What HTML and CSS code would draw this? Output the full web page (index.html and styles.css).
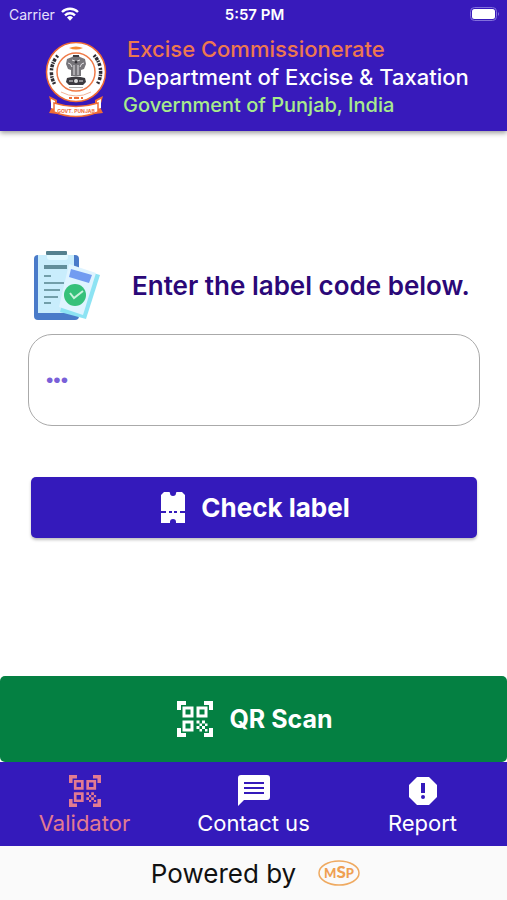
FILE: index.html
```html
<!DOCTYPE html>
<html lang="en">
<head>
<meta charset="utf-8">
<meta name="viewport" content="width=device-width, initial-scale=1">
<title>Label Validator</title>
<link rel="stylesheet" href="styles.css">
</head>
<body>
<svg class="defs" width="0" height="0" aria-hidden="true">
  <symbol id="qr" viewBox="0 0 36 36">
    <path fill="currentColor" d="M0 0h9v4H4v5H0zM27 0h9v9h-4V4h-5zM0 27h4v5h5v4H0zM32 27h4v9h-9v-4h5z"/>
    <path fill="none" stroke="currentColor" stroke-width="3" d="M7 7h8v8H7zM21 7h8v8h-8zM7 21h8v8H7z"/>
    <path fill="currentColor" d="M19.500 19.500h3v3h-3zM25 19.500h3v3h-3zM22.500 22.500H25V25h-2.500zM28 22.500h2.500V25H28zM19.500 25h3v3h-3zM25 25h3v3h-3zM22.500 28H25v2.500h-2.500zM28 28h2.500v2.500H28z"/>
  </symbol>
</svg>
<header class="top">
  <div class="status">
    <span class="carrier">Carrier
      <svg width="18" height="14" viewBox="0 0 18 14" aria-hidden="true"><g fill="none" stroke="#fff" stroke-width="2.400"><path d="M1 5a11.500 11.500 0 0 1 16 0"/><path d="M4 8.300a7.200 7.200 0 0 1 10 0"/></g><path fill="#fff" d="M6 10.500a4.400 4.400 0 0 1 6 0L9 13.700z"/></svg>
    </span>
    <span class="clock">5:57 PM</span>
    <svg class="battery" width="30" height="14" viewBox="0 0 30 14" role="img" aria-label="Battery full"><rect x=".5" y=".5" width="26" height="13" rx="4" fill="none" stroke="#8270dc"/><rect x="2" y="2" width="23" height="10" rx="2.500" fill="#fff"/><path fill="#8270dc" d="M28 5q2 2 0 4z"/></svg>
  </div>
  <div class="brand">
    <svg class="seal" width="62" height="76" viewBox="0 0 62 76" role="img" aria-label="Government of Punjab seal">
      <path fill="#ef6c35" d="M4 54l8 4v14l-8-1 3-6zM58 54l-8 4v14l8-1-3-6z"/>
      <path fill="#fff" d="M6 57l4 2v8l-4-1zM56 57l-4 2v8l4-1z"/>
      <circle cx="31" cy="30" r="29.500" fill="#fff" stroke="#ef6c35" stroke-width="1.500"/>
      <circle cx="31" cy="30" r="19" fill="#fff" stroke="#ef7a48" stroke-width="1.500"/>
      <path d="M24 6q7-3 14 0q-7 3-14 0" fill="#f58a35"/>
      <g fill="none" stroke="#302c32" stroke-width="3.500">
        <path d="M9.500 42A24.500 24.500 0 0 1 13 13.300" stroke-dasharray="2 1 3 .7 1.500 1 3 2"/>
        <path d="M49 13.300A24.500 24.500 0 0 1 52.500 42" stroke-dasharray="2 1 3 .7 1.500 1 3 2"/>
      </g>
      <g fill="#77757a">
        <path d="M27 15q4-4 8 0l5 2 1 5-2 5-3 1v6H26v-6l-3-1-2-5 1-5z"/>
        <path fill="#3c3a40" d="M22 36q9-3 18 0l1 4-3 3H24l-3-3zM28 13h6v2h-6z"/>
        <path stroke="#e4e2e5" fill="none" d="M27 18q4 3 8 0M23 21q3 0 4 4M39 21q-3 0-4 4M29 23v10M33 23v10M24 39h4M34 39h4"/>
        <circle cx="31" cy="39" r="2" fill="#ddd"/>
        <circle cx="31" cy="20" r="1.500" fill="#343238"/>
        <path fill="#aaa" d="M24 45h14v1H24z"/>
      </g>
      <path d="M16 50q15 8 30 0" fill="none" stroke="#f2b39a"/>
      <path d="M24 56h3m2 0h5m2 0h2" stroke="#ef6c35" stroke-width="2"/>
      <path d="M9 61q22 7 44 0v9q-22 9-44 0z" fill="#fff" stroke="#ef6c35" stroke-width="1.500"/>
      <text x="31" y="71" text-anchor="middle" class="ribbon">GOVT. PUNJAB</text>
    </svg>
    <div class="titles">
      <p class="commission">Excise Commissionerate</p>
      <h1 class="department">Department of Excise &amp; Taxation</h1>
      <p class="government">Government of Punjab, India</p>
    </div>
  </div>
</header>
<main class="content">
  <form class="form">
    <div class="prompt">
      <svg width="68" height="72" viewBox="0 0 68 72" aria-hidden="true">
        <rect x="0" y="5" width="45" height="65" rx="4" fill="#4a7bc9"/>
        <path d="M4 5h36v58H4z" fill="#c9edfc"/>
        <path d="M13 4h21v3q0 3-3 3H16q-3 0-3-3z" fill="#e0f8ff"/>
        <rect x="12" y="1" width="21" height="4" rx="1" fill="#55818f"/>
        <path d="M10 17h23" stroke="#628e9b" stroke-width="4"/>
        <path d="M10 26h7M10 33h20M10 40h16M10 47h14M10 53h7" stroke="#729ea9" stroke-width="2"/>
        <path d="M39 17l27 8-14 44-26-7z" fill="#8de3f3"/>
        <path d="M35 14l27 9-13 42-24-8z" fill="#dff4ff"/>
        <path d="M37 19l21 6-3 8-20-6z" fill="#729cf1"/>
        <circle cx="41" cy="45" r="11" fill="#36c17a"/>
        <path d="M36 43l4 5 9-7" fill="none" stroke="#c8f3dc" stroke-width="2"/>
      </svg>
      <label for="code">Enter the label code below.</label>
    </div>
    <input id="code" class="code" type="text" placeholder="•••">
    <button class="check" type="submit">
      <svg width="24" height="32" viewBox="0 0 24 32" aria-hidden="true"><path fill="#fff" d="M3 1h5q1 0 1 1q0 3 3 3t3-3q0-1 1-1h5l3 3v16H0V4zM0 22h24v10h-9v-1q0-3-3-3t-3 3v1H0zM5 19h3v4H5zM11 19h2v4h-2zM16 19h3v4h-3z"/></svg>
      Check label
    </button>
  </form>
</main>
<button class="scan" type="button">
  <svg width="36" height="36" aria-hidden="true"><use href="#qr"/></svg>
  QR Scan
</button>
<nav class="tabs">
  <a class="tab active" href="#validator"><svg width="32" height="32" viewBox="0 0 36 36" aria-hidden="true"><use href="#qr"/></svg>Validator</a>
  <a class="tab" href="#contact"><svg width="32" height="32" viewBox="0 0 32 32" aria-hidden="true"><path fill="#fff" d="M3 0h26q3 0 3 3v19q0 3-3 3H6l-6 6V3q0-3 3-3z"/><path d="M6 8h20M6 13h20M6 18h20" stroke="#341abb" stroke-width="2"/></svg>Contact us</a>
  <a class="tab" href="#report"><svg width="32" height="32" viewBox="0 0 32 32" aria-hidden="true"><path fill="#fff" d="M10 2h12l8 8v12l-8 8H10l-8-8V10z"/><path fill="#341abb" d="M14 8h4v10h-4z"/><circle cx="16" cy="22" r="2" fill="#341abb"/></svg>Report</a>
</nav>
<footer class="footer">
  <span>Powered by</span>
  <svg width="42" height="26" viewBox="0 0 42 26" role="img" aria-label="MSP"><ellipse cx="21" cy="13" rx="20" ry="12" fill="none" stroke="#efaa61" stroke-width="1.500"/><text x="21" y="18" text-anchor="middle" class="msp">M<tspan class="msp-s">S</tspan>P</text></svg>
</footer>
</body>
</html>
```
FILE: styles.css
```css
* { box-sizing: border-box; }
body {
  margin: 0;
  min-height: 100vh;
  display: flex;
  flex-direction: column;
  background: #fff;
  font-family: Inter, "Liberation Sans", sans-serif;
}
.defs { position: absolute; }
svg { flex-shrink: 0; }
p, h1 { margin: 0; }
button { border: 0; font-family: inherit; color: #fff; }

.top {
  background: #381abb;
  color: #fff;
  padding-bottom: 12px;
  box-shadow: 0 2px 5px rgba(0, 0, 0, 0.4);
}
.status {
  display: grid;
  grid-template-columns: 1fr auto 1fr;
  align-items: center;
  height: 28px;
  padding: 0 7px 0 9px;
  font-size: 14px;
}
.carrier { display: flex; align-items: center; gap: 6px; color: #e6e0fc; }
.clock { font-size: 15px; font-weight: 600; }
.battery { justify-self: end; }
.brand {
  display: flex;
  align-items: center;
  gap: 16px;
  padding: 7px 8px 0 45px;
}
.seal { margin-top: 6px; }
.ribbon { font-size: 5px; font-weight: 700; fill: #ef6c35; }
.titles {
  font-weight: 500;
  line-height: 28px;
  white-space: nowrap;
}
.commission, .department { padding-left: 4px; font-size: 22px; font-weight: 500; }
.commission { color: #ed7850; }
.government { color: #a8ec8c; font-size: 20px; }

.content {
  flex: 1;
  display: flex;
  flex-direction: column;
  justify-content: center;
  padding: 0 27px 20px 28px;
}
.form { display: flex; flex-direction: column; }
.prompt {
  display: flex;
  align-items: center;
  gap: 30px;
  padding-left: 6px;
  color: #2b0878;
  font-size: 26px;
  font-weight: 600;
  white-space: nowrap;
}
.code {
  width: 100%;
  height: 92px;
  margin-top: 12px;
  padding: 0 17px;
  border: 1px solid #aaa;
  border-radius: 24px;
  background: #fff;
  font-family: "Liberation Sans", sans-serif;
  font-size: 21px;
  color: #341abb;
}
.code::placeholder { color: #7960d8; opacity: 1; }
.check {
  display: flex;
  align-items: center;
  justify-content: center;
  gap: 16px;
  height: 61px;
  margin: 51px 3px 0;
  border-radius: 5px;
  background: #341abb;
  box-shadow: 0 2px 3px rgba(0, 0, 0, 0.25);
  font-size: 26px;
  font-weight: 700;
}
.scan {
  display: flex;
  align-items: center;
  justify-content: center;
  gap: 16px;
  height: 86px;
  border-radius: 5px;
  background: #048042;
  font-size: 25px;
  font-weight: 700;
}
.check, .scan { padding: 0 6px 0 9px; }
.tabs {
  display: grid;
  grid-template-columns: repeat(3, 1fr);
  height: 84px;
  background: #341abb;
}
.tab {
  display: flex;
  flex-direction: column;
  align-items: center;
  padding-top: 13px;
  color: #fff;
  font-size: 22px;
  line-height: 32px;
  text-decoration: none;
}
.active { color: #e27b91; }
.footer {
  display: flex;
  align-items: center;
  justify-content: center;
  gap: 22px;
  height: 54px;
  padding-left: 4px;
  background: #fafafa;
  color: #111;
  font-size: 26px;
}
.msp { font-family: Lato, sans-serif; font-size: 13px; font-weight: 900; fill: #efa052; }
.msp-s { font-size: 17px; }
```
